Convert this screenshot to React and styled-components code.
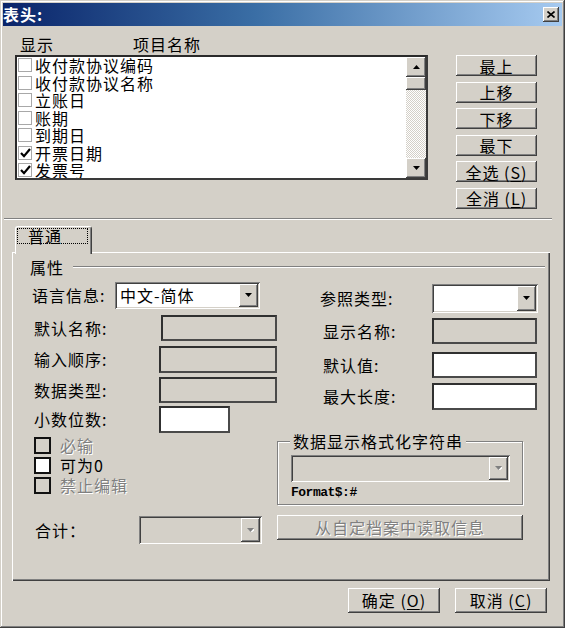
import React from "react";
import styled, { createGlobalStyle, css } from "styled-components";

const FACE = "#D4D0C8";
const SHADOW = "#808080";
const DARK = "#404040";
const CJK = `"Noto Sans CJK SC", "Noto Sans", sans-serif`;

const GlobalStyle = createGlobalStyle`
  * { box-sizing: border-box; }
  html, body { margin: 0; padding: 0; background: ${FACE}; }
  body { font-family: ${CJK}; font-size: 16px; color: #000; }
`;

const raisedEdge = css`
  background: ${FACE};
  box-shadow: inset -1px -1px ${DARK}, inset 1px 1px #fff, inset -2px -2px ${SHADOW}, inset 2px 2px ${FACE};
`;
const sunkenEdge = css`
  box-shadow: inset 1px 1px ${SHADOW}, inset -1px -1px #fff, inset 2px 2px ${DARK}, inset -2px -2px ${FACE};
`;
const disabledText = css`
  color: ${SHADOW};
  text-shadow: 1px 1px 0 #fff;
`;

const Window = styled.div`
  width: 565px;
  height: 628px;
  padding: 3px;
  background: ${FACE};
  box-shadow: inset -1px -1px ${DARK}, inset 1px 1px ${FACE}, inset -2px -2px ${SHADOW}, inset 2px 2px #fff;
  display: flex;
  flex-direction: column;
  overflow: hidden;
`;

const TitleBar = styled.div`
  height: 23px;
  flex: none;
  background: linear-gradient(90deg, #0a246a 0%, #3a6ea5 45%, #a6caf0 100%);
  display: flex;
  align-items: center;
  justify-content: space-between;
  padding: 0 3px 0 0;
`;

const TitleText = styled.span`
  color: #fff;
  font-weight: bold;
  font-size: 16px;
  line-height: 23px;
  letter-spacing: 1px;
`;

const CloseButton = styled.div`
  width: 16px;
  height: 15px;
  ${raisedEdge};
  display: flex;
  align-items: center;
  justify-content: center;
`;

const ColumnHeads = styled.div`
  display: flex;
  padding: 8px 0 1px 17px;
  line-height: 20px;
  letter-spacing: 1px;
`;

const HeadCell = styled.span`
  width: ${(p) => p.$w}px;
  white-space: nowrap;
`;

const TopRow = styled.div`
  display: flex;
  align-items: flex-start;
  padding-left: 12px;
`;

const ListBox = styled.div`
  width: 413px;
  height: 125px;
  background: #fff;
  border: 2px solid;
  border-color: #2a2a2a #3a3a3a #3a3a3a #2a2a2a;
  display: flex;
  overflow: hidden;
`;

const ListItems = styled.div`
  flex: 1;
  overflow: hidden;
  padding-left: 1px;
`;

const ListItem = styled.div`
  display: flex;
  align-items: flex-start;
  height: 17.5px;
  line-height: 17px;
  letter-spacing: 1px;
  white-space: nowrap;
`;

const ItemCheck = styled.span`
  flex: none;
  width: 14px;
  height: 14px;
  margin: 1px 3px 0 0;
  border: 1px solid #a8a8a8;
  background: #fff;
  display: flex;
  align-items: center;
  justify-content: center;
`;

const ScrollBar = styled.div`
  width: 20px;
  flex: none;
  display: flex;
  flex-direction: column;
`;

const ScrollArrow = styled.div`
  height: 20px;
  ${raisedEdge};
  display: flex;
  align-items: center;
  justify-content: center;
`;

const ScrollThumb = styled.div`
  height: 13px;
  ${raisedEdge};
`;

const ScrollTrack = styled.div`
  flex: 1;
  background: repeating-conic-gradient(#ffffff 0 25%, ${FACE} 0 50%) 0 0 / 2px 2px;
`;

const SideButtons = styled.div`
  margin-left: 28px;
  width: 81px;
  display: flex;
  flex-direction: column;
  gap: 5.6px;
`;

const PushButton = styled.div`
  width: ${(p) => p.$w || 81}px;
  height: ${(p) => p.$h || 21}px;
  margin-top: ${(p) => p.$mt || 0}px;
  ${raisedEdge};
  display: flex;
  align-items: center;
  justify-content: center;
  line-height: 18px;
  letter-spacing: 1px;
  white-space: nowrap;
  ${(p) => p.$disabled && disabledText};
`;

const Mnemonic = styled.span`
  text-decoration: underline;
  text-underline-offset: 2px;
`;

const Separator = styled.div`
  margin: 9px 0 0 1px;
  width: 548px;
  height: 2px;
  border-top: 1px solid ${SHADOW};
  border-bottom: 1px solid #fff;
`;

const TabStrip = styled.div`
  display: flex;
  padding-left: 12px;
  margin-top: 6px;
  margin-bottom: -2px;
  position: relative;
  z-index: 1;
`;

const Tab = styled.div`
  width: 77px;
  height: 28px;
  background: ${FACE};
  border-top: 1px solid #fff;
  border-left: 1px solid #fff;
  border-right: 1px solid ${DARK};
  box-shadow: inset -1px 0 ${SHADOW};
  border-radius: 3px 3px 0 0;
  padding: 1px 3px 0 1px;
`;

const FocusRect = styled.div`
  border: 1px dotted #000;
  height: 16px;
  line-height: 14px;
  padding-left: 10px;
  letter-spacing: 1px;
`;

const Panel = styled.div`
  margin-left: 9px;
  width: 538px;
  height: 329px;
  flex: none;
  background: ${FACE};
  box-shadow: inset 1px 1px #fff, inset -1px -1px ${DARK}, inset -2px -2px ${SHADOW};
  display: flex;
  flex-direction: column;
`;

const SectionHead = styled.div`
  display: flex;
  align-items: center;
  margin: 4px 5px 0 18px;
  line-height: 22px;
  letter-spacing: 1px;
`;

const SectionLine = styled.div`
  flex: 1;
  height: 2px;
  margin-left: 9px;
  border-top: 1px solid ${SHADOW};
  border-bottom: 1px solid #fff;
`;

const Form = styled.div`
  display: flex;
  margin-top: 4px;
  padding-left: 20px;
`;

const Column = styled.div`
  width: ${(p) => p.$w}px;
  display: flex;
  flex-direction: column;
  align-items: flex-start;
`;

const FieldRow = styled.div`
  display: flex;
  align-items: center;
  height: ${(p) => p.$h}px;
  margin-top: ${(p) => p.$mt || 0}px;
`;

const FieldLabel = styled.span`
  flex: none;
  width: ${(p) => p.$w}px;
  margin-left: ${(p) => p.$ml || 0}px;
  line-height: 20px;
  letter-spacing: 1px;
  white-space: nowrap;
`;

const TextBox = styled.div`
  flex: none;
  width: ${(p) => p.$w}px;
  height: 100%;
  background: ${(p) => (p.$white ? "#fff" : FACE)};
  border: 2px solid;
  border-color: #303030 #4a4a4a #4a4a4a #303030;
`;

const Combo = styled.div`
  flex: none;
  width: ${(p) => p.$w}px;
  height: ${(p) => (p.$h ? `${p.$h}px` : "100%")};
  padding: 2px;
  background: ${(p) => (p.$disabled ? FACE : "#fff")};
  ${sunkenEdge};
  display: flex;
  align-items: stretch;
`;

const ComboValue = styled.span`
  flex: 1;
  padding-left: 3px;
  line-height: 22px;
  letter-spacing: 1px;
  white-space: nowrap;
  overflow: hidden;
`;

const DropButton = styled.div`
  width: 19px;
  flex: none;
  ${raisedEdge};
  display: flex;
  align-items: center;
  justify-content: center;
`;

const CheckRow = styled.div`
  display: flex;
  align-items: center;
  height: 17px;
  margin-top: ${(p) => p.$mt}px;
  margin-left: 2px;
`;

const BigCheck = styled.span`
  width: 17px;
  height: 17px;
  flex: none;
  border: 2px solid #111;
  background: ${(p) => (p.$white ? "#fff" : FACE)};
`;

const CheckLabel = styled.span`
  margin-left: 9px;
  line-height: 17px;
  letter-spacing: 1px;
  white-space: nowrap;
  ${(p) => p.$disabled && disabledText};
`;

const GroupFrame = styled.div`
  margin-top: ${(p) => p.$mt}px;
  width: 246px;
  height: 64px;
  border: 1px solid ${SHADOW};
  box-shadow: inset 1px 1px #fff, 1px 1px 0 #fff;
  display: flex;
  flex-direction: column;
  align-items: flex-start;
`;

const GroupTitle = styled.span`
  margin: -11px 0 0 12px;
  padding: 0 3px;
  background: ${FACE};
  line-height: 20px;
  letter-spacing: 1px;
  white-space: nowrap;
`;

const GroupBody = styled.div`
  margin: 4px 0 0 13px;
  display: flex;
  flex-direction: column;
`;

const FormatText = styled.span`
  margin-top: 3px;
  font-family: "Liberation Mono", "DejaVu Sans Mono", monospace;
  font-weight: bold;
  font-size: 13px;
  line-height: 16px;
  letter-spacing: -0.5px;
`;

const Footer = styled.div`
  display: flex;
  justify-content: flex-end;
  gap: 15px;
  margin-top: 7px;
  padding-right: 15px;
`;

const DownTri = ({ disabled }) => (
  <svg width="7" height="4" viewBox="0 0 7 4">
    {disabled && <path d="M1 1h7L4.5 5z" fill="#fff" />}
    <path d="M0 0h7L3.5 4z" fill={disabled ? SHADOW : "#000"} />
  </svg>
);

const UpTri = () => (
  <svg width="7" height="4" viewBox="0 0 7 4">
    <path d="M3.5 0L7 4H0z" fill="#000" />
  </svg>
);

const Tick = () => (
  <svg width="11" height="10" viewBox="0 0 11 10">
    <path d="M1 5l3 3.2L10 1" fill="none" stroke="#000" strokeWidth="2.2" />
  </svg>
);

const CloseGlyph = () => (
  <svg width="8" height="7" viewBox="0 0 8 7">
    <path d="M0.5 0.5L7.5 6.5M7.5 0.5L0.5 6.5" stroke="#000" strokeWidth="1.6" />
  </svg>
);

const ComboBox = ({ w, h, value, disabled }) => (
  <Combo $w={w} $h={h} $disabled={disabled}>
    <ComboValue>{value}</ComboValue>
    <DropButton>
      <DownTri disabled={disabled} />
    </DropButton>
  </Combo>
);

const items = [
  { text: "收付款协议编码", checked: false },
  { text: "收付款协议名称", checked: false },
  { text: "立账日", checked: false },
  { text: "账期", checked: false },
  { text: "到期日", checked: false },
  { text: "开票日期", checked: true },
  { text: "发票号", checked: true },
];

export default function App() {
  return (
    <>
      <GlobalStyle />
      <Window>
        <TitleBar>
          <TitleText>表头:</TitleText>
          <CloseButton>
            <CloseGlyph />
          </CloseButton>
        </TitleBar>

        <ColumnHeads>
          <HeadCell $w={113}>显示</HeadCell>
          <HeadCell $w={100}>项目名称</HeadCell>
        </ColumnHeads>

        <TopRow>
          <ListBox>
            <ListItems>
              {items.map((it) => (
                <ListItem key={it.text}>
                  <ItemCheck>{it.checked && <Tick />}</ItemCheck>
                  {it.text}
                </ListItem>
              ))}
            </ListItems>
            <ScrollBar>
              <ScrollArrow>
                <UpTri />
              </ScrollArrow>
              <ScrollThumb />
              <ScrollTrack />
              <ScrollArrow>
                <DownTri />
              </ScrollArrow>
            </ScrollBar>
          </ListBox>
          <SideButtons>
            <PushButton>最上</PushButton>
            <PushButton>上移</PushButton>
            <PushButton>下移</PushButton>
            <PushButton>最下</PushButton>
            <PushButton>
              全选&nbsp;(<Mnemonic>S</Mnemonic>)
            </PushButton>
            <PushButton>
              全消&nbsp;(<Mnemonic>L</Mnemonic>)
            </PushButton>
          </SideButtons>
        </TopRow>

        <Separator />

        <TabStrip>
          <Tab>
            <FocusRect>普通</FocusRect>
          </Tab>
        </TabStrip>

        <Panel>
          <SectionHead>
            属性
            <SectionLine />
          </SectionHead>
          <Form>
            <Column $w={245}>
              <FieldRow $h={27}>
                <FieldLabel $w={83}>语言信息:</FieldLabel>
                <ComboBox w={145} value="中文-简体" />
              </FieldRow>
              <FieldRow $h={26} $mt={6}>
                <FieldLabel $w={127} $ml={2}>默认名称:</FieldLabel>
                <TextBox $w={116} />
              </FieldRow>
              <FieldRow $h={27} $mt={5}>
                <FieldLabel $w={125} $ml={2}>输入顺序:</FieldLabel>
                <TextBox $w={118} />
              </FieldRow>
              <FieldRow $h={26} $mt={4}>
                <FieldLabel $w={125} $ml={2}>数据类型:</FieldLabel>
                <TextBox $w={118} />
              </FieldRow>
              <FieldRow $h={27} $mt={3}>
                <FieldLabel $w={125} $ml={2}>小数位数:</FieldLabel>
                <TextBox $w={71} $white />
              </FieldRow>
              <CheckRow $mt={4}>
                <BigCheck />
                <CheckLabel $disabled>必输</CheckLabel>
              </CheckRow>
              <CheckRow $mt={3}>
                <BigCheck $white />
                <CheckLabel>可为0</CheckLabel>
              </CheckRow>
              <CheckRow $mt={3}>
                <BigCheck />
                <CheckLabel $disabled>禁止编辑</CheckLabel>
              </CheckRow>
              <FieldRow $h={28} $mt={22}>
                <FieldLabel $w={104} $ml={3}>合计：</FieldLabel>
                <ComboBox w={123} disabled />
              </FieldRow>
            </Column>

            <Column $w={261}>
              <FieldRow $h={29} $mt={2}>
                <FieldLabel $w={112} $ml={43}>参照类型:</FieldLabel>
                <ComboBox w={106} />
              </FieldRow>
              <FieldRow $h={26} $mt={5}>
                <FieldLabel $w={109} $ml={46}>显示名称:</FieldLabel>
                <TextBox $w={105} />
              </FieldRow>
              <FieldRow $h={26} $mt={8}>
                <FieldLabel $w={109} $ml={46}>默认值:</FieldLabel>
                <TextBox $w={105} $white />
              </FieldRow>
              <FieldRow $h={27} $mt={5}>
                <FieldLabel $w={109} $ml={46}>最大长度:</FieldLabel>
                <TextBox $w={105} $white />
              </FieldRow>
              <GroupFrame $mt={31}>
                <GroupTitle>数据显示格式化字符串</GroupTitle>
                <GroupBody>
                  <ComboBox w={219} h={27} disabled />
                  <FormatText>Format$:#</FormatText>
                </GroupBody>
              </GroupFrame>
              <PushButton $w={246} $h={25} $mt={10} $disabled>
                从自定档案中读取信息
              </PushButton>
            </Column>
          </Form>
        </Panel>

        <Footer>
          <PushButton $w={92} $h={25}>
            确定&nbsp;(<Mnemonic>O</Mnemonic>)
          </PushButton>
          <PushButton $w={92} $h={25}>
            取消&nbsp;(<Mnemonic>C</Mnemonic>)
          </PushButton>
        </Footer>
      </Window>
    </>
  );
}
